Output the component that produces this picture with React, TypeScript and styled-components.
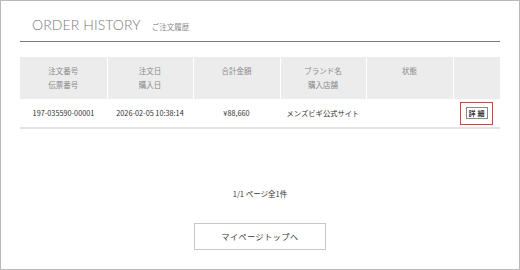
import React from "react";
import styled, { createGlobalStyle } from "styled-components";

const GlobalStyle = createGlobalStyle`
  html, body {
    margin: 0;
    padding: 0;
    background: #fff;
  }
  body {
    font-family: "Noto Sans CJK JP", "Noto Sans", sans-serif;
    color: #333;
  }
`;

type Order = {
  orderNo: string;
  orderedAt: string;
  total: string;
  shop: string;
  status: string;
};

const Frame = styled.div`
  box-sizing: border-box;
  width: 520px;
  height: 270px;
  border: 1px solid #bababa;
  padding: 0 19px;
  display: flex;
  flex-direction: column;
`;

const TitleRow = styled.div`
  display: flex;
  align-items: baseline;
  gap: 11px;
  padding: 15px 0 7px 12px;
  border-bottom: 1px solid #7a7a7a;
`;

const TitleMain = styled.h1`
  margin: 0;
  font-family: Lato, "Liberation Sans", sans-serif;
  font-weight: 300;
  font-size: 14px;
  line-height: 18px;
  letter-spacing: 0.1px;
  color: #7a7a7a;
`;

const TitleSub = styled.span`
  font-size: 7.5px;
  color: #8a8a8a;
`;

const Table = styled.table`
  margin-top: 15px;
  width: 100%;
  border-collapse: collapse;
  table-layout: fixed;
`;

// 見出し行
const HeadCell = styled.th<{ $w?: number }>`
  width: ${(p) => (p.$w ? `${p.$w}px` : "auto")};
  height: 42px;
  padding: 7px 0 0;
  vertical-align: top;
  background: #ececec;
  border-left: 1px solid #fff;
  font-size: 7.5px;
  font-weight: normal;
  line-height: 14px;
  color: #8a8a8a;
  text-align: center;
  box-sizing: border-box;

  &:first-child {
    border-left: none;
  }
`;

const BodyRow = styled.tr`
  border-bottom: 2px solid #e4e4e4;
`;

const BodyCell = styled.td`
  height: 28px;
  padding: 0;
  font-size: 7.3px;
  color: #333;
  text-align: center;
  vertical-align: middle;
`;

const DetailWrap = styled.span`
  display: inline-flex;
  align-items: center;
  justify-content: center;
  box-sizing: border-box;
  width: 33px;
  height: 23px;
  border: 1px solid #e8393f;
`;

const DetailButton = styled.button`
  box-sizing: border-box;
  width: 22px;
  height: 12px;
  padding: 0 0 0 2px;
  border: 1px solid #8a8a8a;
  background: #fff;
  font-family: "Noto Sans CJK JP", sans-serif;
  font-size: 7px;
  font-weight: bold;
  line-height: 10px;
  letter-spacing: 2px;
  color: #333;
  cursor: pointer;
`;

const Pager = styled.p`
  margin: 58px 0 0;
  text-align: center;
  font-size: 7.5px;
  line-height: 14px;
  color: #333;
`;

const TopButton = styled.a`
  align-self: center;
  box-sizing: border-box;
  width: 132px;
  height: 27px;
  margin-top: 22px;
  display: flex;
  align-items: center;
  justify-content: center;
  border: 1px solid #c8c8c8;
  font-size: 8px;
  color: #333;
  text-decoration: none;
  letter-spacing: 0.6px;
`;

const orders: Order[] = [
  {
    orderNo: "197-035590-00001",
    orderedAt: "2026-02-05 10:38:14",
    total: "¥88,660",
    shop: "メンズビギ公式サイト",
    status: "",
  },
];

function App() {
  return (
    <>
      <GlobalStyle />
      <Frame>
        <TitleRow>
          <TitleMain>ORDER HISTORY</TitleMain>
          <TitleSub>ご注文履歴</TitleSub>
        </TitleRow>

        <Table>
          <thead>
            <tr>
              <HeadCell $w={87}>
                注文番号
                <br />
                伝票番号
              </HeadCell>
              <HeadCell $w={86}>
                注文日
                <br />
                購入日
              </HeadCell>
              <HeadCell $w={87}>合計金額</HeadCell>
              <HeadCell $w={86}>
                ブランド名
                <br />
                購入店舗
              </HeadCell>
              <HeadCell $w={87}>状態</HeadCell>
              <HeadCell />
            </tr>
          </thead>
          <tbody>
            {orders.map((o) => (
              <BodyRow key={o.orderNo}>
                <BodyCell>{o.orderNo}</BodyCell>
                <BodyCell>{o.orderedAt}</BodyCell>
                <BodyCell>{o.total}</BodyCell>
                <BodyCell>{o.shop}</BodyCell>
                <BodyCell>{o.status}</BodyCell>
                <BodyCell>
                  <DetailWrap>
                    <DetailButton>詳細</DetailButton>
                  </DetailWrap>
                </BodyCell>
              </BodyRow>
            ))}
          </tbody>
        </Table>

        <Pager>1/1 ページ全1件</Pager>
        <TopButton href="#">マイページトップへ</TopButton>
      </Frame>
    </>
  );
}

export default App;
